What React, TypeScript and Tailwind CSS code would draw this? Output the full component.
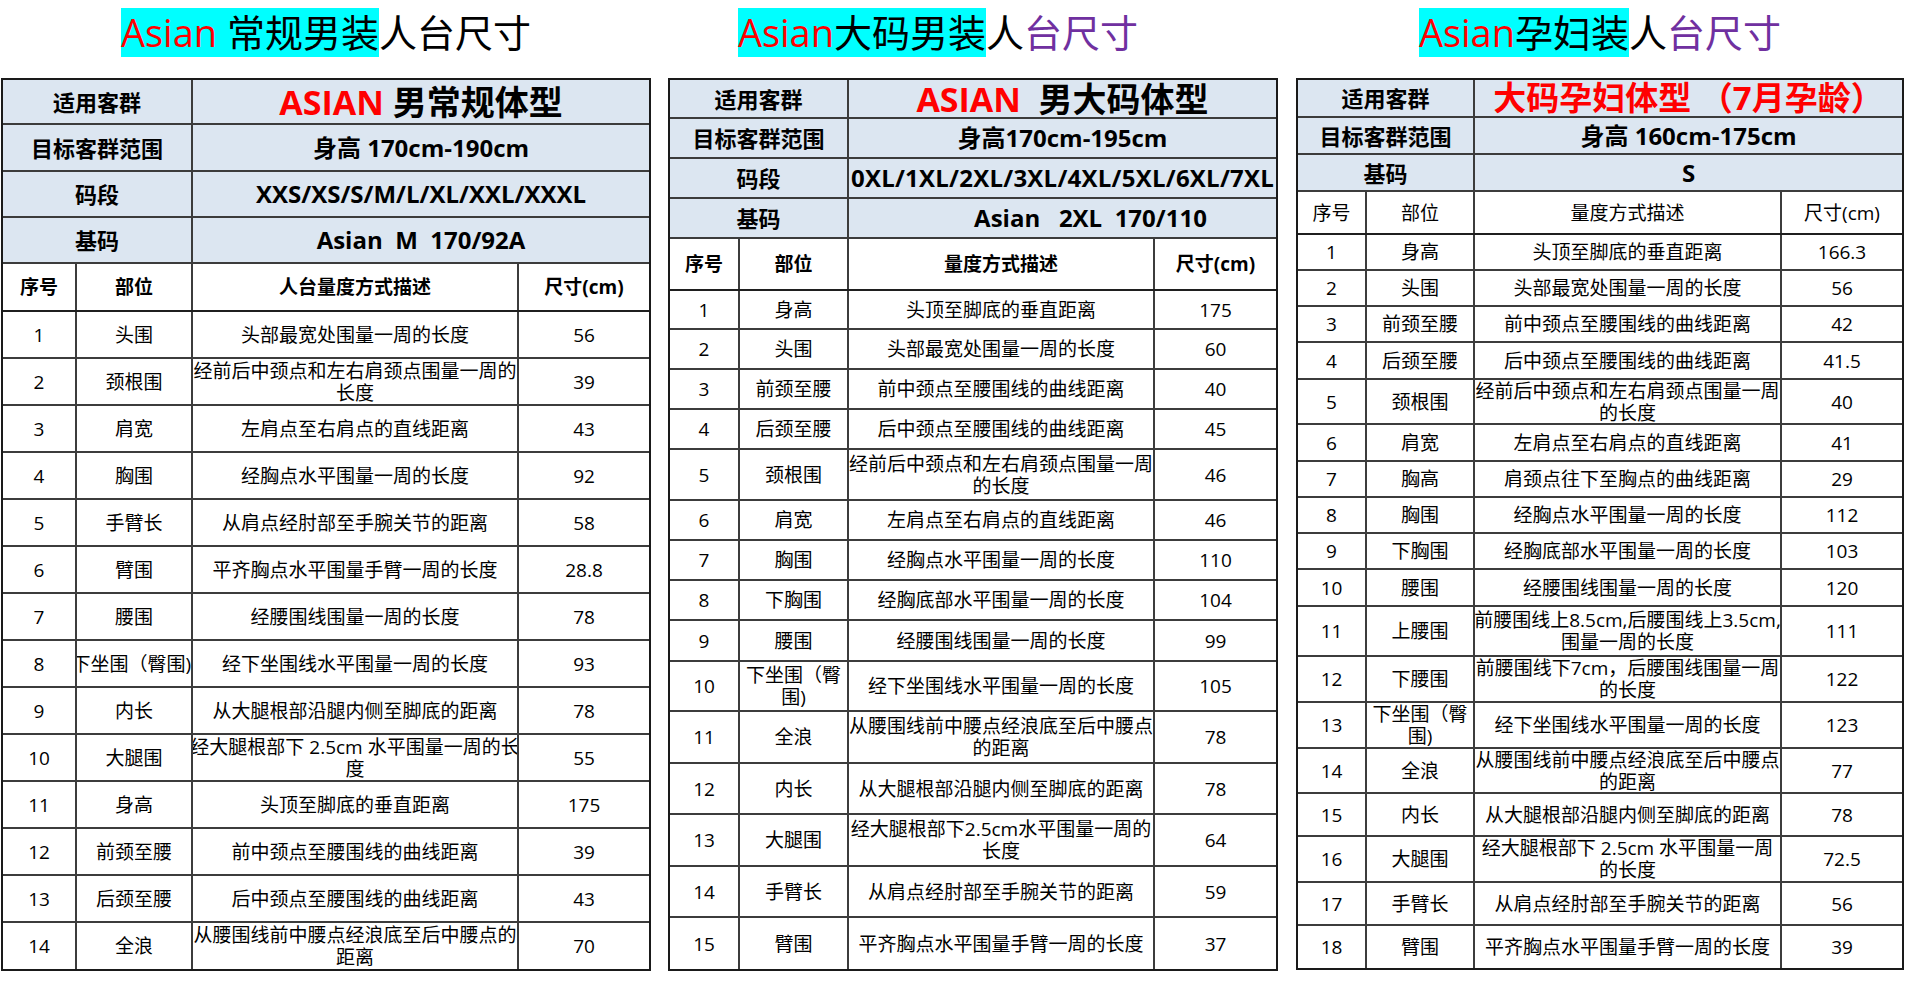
import React from "react"

type InfoRow = { h: string; label: string; value: React.ReactNode; valueClass?: string }
type DataRow = { h: string; no: string; part: string; desc: string; size: string; partAlign?: string }

type TableProps = {
	width: string
	cols: string
	infoCols: string
	info: InfoRow[]
	header: { h: string; bold: boolean; desc: string }
	rows: DataRow[]
}

const Cell = ({ children, className = "" }: { children: React.ReactNode; className?: string }) => (
	<div className={`flex items-center overflow-hidden ${className.includes("justify-") ? "" : "justify-center"} ${className}`}>
		<div className="shrink-0 whitespace-pre text-center">{children}</div>
	</div>
)

const SizeTable = ({ width, cols, infoCols, info, header, rows }: TableProps) => (
	<div className={`${width} border-2 border-[#1a1a1a] text-black`}>
		{info.map((row) => (
			<div key={row.label} className={`grid ${infoCols} ${row.h} border-b-2 border-[#3c3c3c] bg-[#dce6f1]`}>
				<Cell className="border-r-2 border-[#3c3c3c] text-[22px] leading-[30px] font-bold">{row.label}</Cell>
				<Cell className={`font-bold leading-[34px] ${row.valueClass ?? "text-[24px]"}`}>{row.value}</Cell>
			</div>
		))}
		<div className={`grid ${cols} ${header.h} border-b-2 border-[#1f1f1f] text-[19px] leading-[24px] ${header.bold ? "font-bold" : "font-normal"}`}>
			<Cell className="border-r-2 border-[#3c3c3c]">序号</Cell>
			<Cell className="border-r-2 border-[#3c3c3c]">部位</Cell>
			<Cell className="border-r-2 border-[#3c3c3c]">{header.desc}</Cell>
			<Cell>尺寸(cm)</Cell>
		</div>
		{rows.map((row, i) => (
			<div
				key={row.no}
				className={`grid ${cols} ${row.h} text-[19px] leading-[22px] ${i < rows.length - 1 ? "border-b-2 border-[#3c3c3c]" : ""}`}
			>
				<Cell className="border-r-2 border-[#3c3c3c]">{row.no}</Cell>
				<Cell className={`border-r-2 border-[#3c3c3c] ${row.partAlign ?? ""}`}>{row.part}</Cell>
				<Cell className="border-r-2 border-[#3c3c3c]">{row.desc}</Cell>
				<Cell>{row.size}</Cell>
			</div>
		))}
	</div>
)

const Title = ({ lead, cyan, rest, purple, className = "" }: { lead: string; cyan: string; rest: string; purple: boolean; className?: string }) => (
	<div className={`flex h-[49px] justify-center text-[38px] leading-[49px] ${className}`}>
		<span className="h-[49px] whitespace-pre bg-[#00ffff]">
			<span className="text-[#ff0000]">{lead}</span>
			<span className="text-black">{cyan}</span>
		</span>
		{purple ? (
			<span className="h-[49px]">
				<span className="text-black">{rest.slice(0, 1)}</span>
				<span className="text-[#7030a0]">{rest.slice(1)}</span>
			</span>
		) : (
			<span className="h-[49px] text-black">{rest}</span>
		)}
	</div>
)

const regularRows: DataRow[] = [
	{ h: "h-[47px]", no: "1", part: "头围", desc: "头部最宽处围量一周的长度", size: "56" },
	{ h: "h-[47px]", no: "2", part: "颈根围", desc: "经前后中颈点和左右肩颈点围量一周的\n长度", size: "39" },
	{ h: "h-[47px]", no: "3", part: "肩宽", desc: "左肩点至右肩点的直线距离", size: "43" },
	{ h: "h-[47px]", no: "4", part: "胸围", desc: "经胸点水平围量一周的长度", size: "92" },
	{ h: "h-[47px]", no: "5", part: "手臂长", desc: "从肩点经肘部至手腕关节的距离", size: "58" },
	{ h: "h-[47px]", no: "6", part: "臂围", desc: "平齐胸点水平围量手臂一周的长度", size: "28.8" },
	{ h: "h-[47px]", no: "7", part: "腰围", desc: "经腰围线围量一周的长度", size: "78" },
	{ h: "h-[47px]", no: "8", part: "下坐围（臀围)", desc: "经下坐围线水平围量一周的长度", size: "93", partAlign: "justify-end" },
	{ h: "h-[47px]", no: "9", part: "内长", desc: "从大腿根部沿腿内侧至脚底的距离", size: "78" },
	{ h: "h-[47px]", no: "10", part: "大腿围", desc: "经大腿根部下 2.5cm 水平围量一周的长\n度", size: "55" },
	{ h: "h-[47px]", no: "11", part: "身高", desc: "头顶至脚底的垂直距离", size: "175" },
	{ h: "h-[47px]", no: "12", part: "前颈至腰", desc: "前中颈点至腰围线的曲线距离", size: "39" },
	{ h: "h-[47px]", no: "13", part: "后颈至腰", desc: "后中颈点至腰围线的曲线距离", size: "43" },
	{ h: "h-[46px]", no: "14", part: "全浪", desc: "从腰围线前中腰点经浪底至后中腰点的\n距离", size: "70" },
]

const plusRows: DataRow[] = [
	{ h: "h-[39px]", no: "1", part: "身高", desc: "头顶至脚底的垂直距离", size: "175" },
	{ h: "h-[40px]", no: "2", part: "头围", desc: "头部最宽处围量一周的长度", size: "60" },
	{ h: "h-[40px]", no: "3", part: "前颈至腰", desc: "前中颈点至腰围线的曲线距离", size: "40" },
	{ h: "h-[40px]", no: "4", part: "后颈至腰", desc: "后中颈点至腰围线的曲线距离", size: "45" },
	{ h: "h-[51px]", no: "5", part: "颈根围", desc: "经前后中颈点和左右肩颈点围量一周\n的长度", size: "46" },
	{ h: "h-[40px]", no: "6", part: "肩宽", desc: "左肩点至右肩点的直线距离", size: "46" },
	{ h: "h-[40px]", no: "7", part: "胸围", desc: "经胸点水平围量一周的长度", size: "110" },
	{ h: "h-[40px]", no: "8", part: "下胸围", desc: "经胸底部水平围量一周的长度", size: "104" },
	{ h: "h-[41px]", no: "9", part: "腰围", desc: "经腰围线围量一周的长度", size: "99" },
	{ h: "h-[50px]", no: "10", part: "下坐围（臀\n围)", desc: "经下坐围线水平围量一周的长度", size: "105" },
	{ h: "h-[52px]", no: "11", part: "全浪", desc: "从腰围线前中腰点经浪底至后中腰点\n的距离", size: "78" },
	{ h: "h-[51px]", no: "12", part: "内长", desc: "从大腿根部沿腿内侧至脚底的距离", size: "78" },
	{ h: "h-[52px]", no: "13", part: "大腿围", desc: "经大腿根部下2.5cm水平围量一周的\n长度", size: "64" },
	{ h: "h-[51px]", no: "14", part: "手臂长", desc: "从肩点经肘部至手腕关节的距离", size: "59" },
	{ h: "h-[51px]", no: "15", part: "臂围", desc: "平齐胸点水平围量手臂一周的长度", size: "37" },
]

const maternityRows: DataRow[] = [
	{ h: "h-[36px]", no: "1", part: "身高", desc: "头顶至脚底的垂直距离", size: "166.3" },
	{ h: "h-[36px]", no: "2", part: "头围", desc: "头部最宽处围量一周的长度", size: "56" },
	{ h: "h-[36px]", no: "3", part: "前颈至腰", desc: "前中颈点至腰围线的曲线距离", size: "42" },
	{ h: "h-[37px]", no: "4", part: "后颈至腰", desc: "后中颈点至腰围线的曲线距离", size: "41.5" },
	{ h: "h-[45px]", no: "5", part: "颈根围", desc: "经前后中颈点和左右肩颈点围量一周\n的长度", size: "40" },
	{ h: "h-[37px]", no: "6", part: "肩宽", desc: "左肩点至右肩点的直线距离", size: "41" },
	{ h: "h-[36px]", no: "7", part: "胸高", desc: "肩颈点往下至胸点的曲线距离", size: "29" },
	{ h: "h-[36px]", no: "8", part: "胸围", desc: "经胸点水平围量一周的长度", size: "112" },
	{ h: "h-[36px]", no: "9", part: "下胸围", desc: "经胸底部水平围量一周的长度", size: "103" },
	{ h: "h-[37px]", no: "10", part: "腰围", desc: "经腰围线围量一周的长度", size: "120" },
	{ h: "h-[50px]", no: "11", part: "上腰围", desc: "前腰围线上8.5cm,后腰围线上3.5cm,\n围量一周的长度", size: "111" },
	{ h: "h-[46px]", no: "12", part: "下腰围", desc: "前腰围线下7cm，后腰围线围量一周\n的长度", size: "122" },
	{ h: "h-[46px]", no: "13", part: "下坐围（臀\n围)", desc: "经下坐围线水平围量一周的长度", size: "123" },
	{ h: "h-[45px]", no: "14", part: "全浪", desc: "从腰围线前中腰点经浪底至后中腰点\n的距离", size: "77" },
	{ h: "h-[43px]", no: "15", part: "内长", desc: "从大腿根部沿腿内侧至脚底的距离", size: "78" },
	{ h: "h-[46px]", no: "16", part: "大腿围", desc: "经大腿根部下 2.5cm 水平围量一周\n的长度", size: "72.5" },
	{ h: "h-[43px]", no: "17", part: "手臂长", desc: "从肩点经肘部至手腕关节的距离", size: "56" },
	{ h: "h-[42px]", no: "18", part: "臂围", desc: "平齐胸点水平围量手臂一周的长度", size: "39" },
]

const App = () => {
	return (
		<div className="flex min-h-screen items-start bg-white pl-px pt-2 font-['Open_Sans','Noto_Sans_CJK_SC',sans-serif]">
			<div className="flex w-[650px] flex-col">
				<Title lead="Asian" cyan=" 常规男装" rest="人台尺寸" purple={false} />
				<div className="mt-[21px]">
					<SizeTable
						width="w-[650px]"
						cols="grid-cols-[74px_116px_326px_1fr]"
						infoCols="grid-cols-[190px_1fr]"
						info={[
							{
								h: "h-[45px]",
								label: "适用客群",
								value: (
									<>
										<span className="text-[#ff0000]">ASIAN</span>
										<span>{" 男常规体型"}</span>
									</>
								),
								valueClass: "text-[34px]",
							},
							{ h: "h-[47px]", label: "目标客群范围", value: "身高 170cm-190cm" },
							{ h: "h-[46px]", label: "码段", value: "XXS/XS/S/M/L/XL/XXL/XXXL" },
							{ h: "h-[46px]", label: "基码", value: "Asian  M  170/92A" },
						]}
						header={{ h: "h-[48px]", bold: true, desc: "人台量度方式描述" }}
						rows={regularRows}
					/>
				</div>
			</div>

			<div className="ml-[17px] flex w-[610px] flex-col">
				<Title lead="Asian" cyan="大码男装" rest="人台尺寸" purple className="pr-[70px]" />
				<div className="mt-[21px]">
					<SizeTable
						width="w-[610px]"
						cols="grid-cols-[70px_109px_306px_1fr]"
						infoCols="grid-cols-[179px_1fr]"
						info={[
							{
								h: "h-[39px]",
								label: "适用客群",
								value: (
									<>
										<span className="text-[#ff0000]">ASIAN</span>
										<span>{"  男大码体型"}</span>
									</>
								),
								valueClass: "text-[34px]",
							},
							{ h: "h-[40px]", label: "目标客群范围", value: "身高170cm-195cm" },
							{ h: "h-[40px]", label: "码段", value: "0XL/1XL/2XL/3XL/4XL/5XL/6XL/7XL", valueClass: "text-[24px] tracking-[0.01em]" },
							{ h: "h-[40px]", label: "基码", value: "Asian   2XL  170/110", valueClass: "pl-[56px] text-[24px]" },
						]}
						header={{ h: "h-[52px]", bold: true, desc: "量度方式描述" }}
						rows={plusRows}
					/>
				</div>
			</div>

			<div className="ml-[18px] flex w-[608px] flex-col">
				<Title lead="Asian" cyan="孕妇装" rest="人台尺寸" purple />
				<div className="mt-[21px]">
					<SizeTable
						width="w-[608px]"
						cols="grid-cols-[69px_108px_307px_1fr]"
						infoCols="grid-cols-[177px_1fr]"
						info={[
							{
								h: "h-[38px]",
								label: "适用客群",
								value: "大码孕妇体型 （7月孕龄）",
								valueClass: "text-[33px] text-[#ff0000]",
							},
							{ h: "h-[37px]", label: "目标客群范围", value: "身高 160cm-175cm" },
							{ h: "h-[37px]", label: "基码", value: "S" },
						]}
						header={{ h: "h-[43px]", bold: false, desc: "量度方式描述" }}
						rows={maternityRows}
					/>
				</div>
			</div>
		</div>
	)
}

export default App
